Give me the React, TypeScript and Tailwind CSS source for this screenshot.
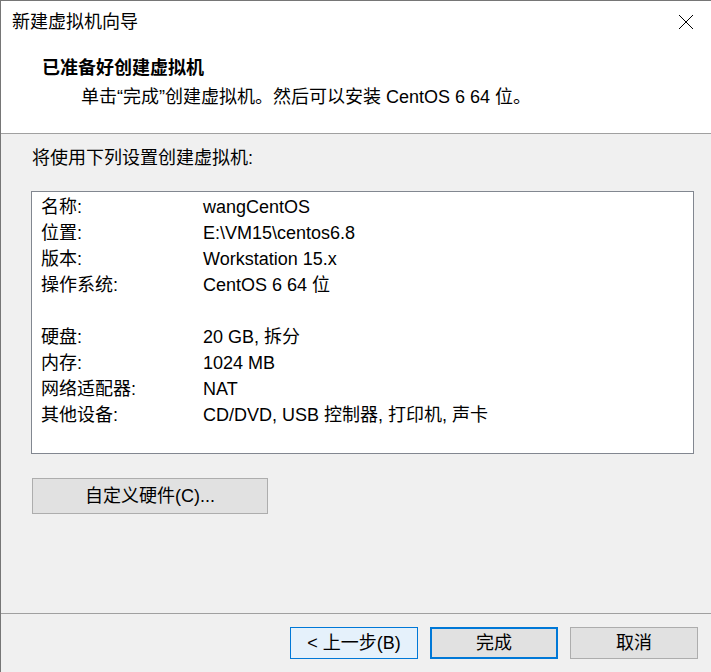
import React from "react";

const FONT = "font-['Liberation_Sans','Noto_Sans_CJK_SC',sans-serif]";

const rows: [string, string][] = [
  ["名称:", "wangCentOS"],
  ["位置:", "E:\\VM15\\centos6.8"],
  ["版本:", "Workstation 15.x"],
  ["操作系统:", "CentOS 6 64 位"],
  ["", ""],
  ["硬盘:", "20 GB, 拆分"],
  ["内存:", "1024 MB"],
  ["网络适配器:", "NAT"],
  ["其他设备:", "CD/DVD, USB 控制器, 打印机, 声卡"],
];

export default function App() {
  return (
    <div
      className={`${FONT} w-[711px] h-[672px] flex flex-col bg-[#f0f0f0] border-t border-l border-[#767676] text-[18px] text-black overflow-hidden`}
    >
      {/* header */}
      <div className="bg-white h-[132px] flex flex-col shrink-0">
        <div className="h-[42px] flex items-center justify-between pl-[11px] pr-[16px]">
          <span className="leading-[26px]">新建虚拟机向导</span>
          <svg width="16" height="16" viewBox="0 0 16 16" className="mr-[1px]">
            <path d="M1 1 L15 15 M15 1 L1 15" stroke="#000" strokeWidth="1" fill="none" />
          </svg>
        </div>
        <div className="mt-[12px] pl-[41px] leading-[26px] font-bold">已准备好创建虚拟机</div>
        <div className="mt-[3px] pl-[80px] leading-[26px]">
          单击“完成”创建虚拟机。然后可以安装 CentOS 6 64 位。
        </div>
      </div>
      <div className="h-px bg-[#a0a0a0] w-[710px] shrink-0" />

      {/* body */}
      <div className="flex-1 flex flex-col pl-[30px]">
        <div className="mt-[11px] leading-[26px] pl-[1px]">将使用下列设置创建虚拟机:</div>
        <div className="mt-[20px] w-[663px] h-[263px] bg-white border border-[#828790] pt-[2px] pl-[9px]">
          {rows.map(([k, v], i) => (
            <div key={i} className="flex h-[26px] leading-[26px]">
              <span className="w-[162px]">{k}</span>
              <span>{v}</span>
            </div>
          ))}
        </div>
        <button className="mt-[24px] ml-[1px] w-[236px] h-[36px] bg-[#e1e1e1] border border-[#adadad] flex items-center justify-center leading-[26px]">
          自定义硬件(C)...
        </button>
      </div>

      {/* footer */}
      <div className="h-px bg-[#a0a0a0] w-[710px] shrink-0" />
      <div className="h-[58px] shrink-0 flex items-start pt-[13px] pl-[289px] gap-[12px]">
        <button className="w-[128px] h-[32px] bg-[#e5f1fb] border border-[#0078d7] flex items-center justify-center leading-[26px]">
          &lt; 上一步(B)
        </button>
        <button className="w-[128px] h-[32px] bg-[#e1e1e1] border-2 border-[#0078d7] flex items-center justify-center leading-[26px]">
          完成
        </button>
        <button className="w-[128px] h-[32px] bg-[#e1e1e1] border border-[#adadad] flex items-center justify-center leading-[26px]">
          取消
        </button>
      </div>
    </div>
  );
}
